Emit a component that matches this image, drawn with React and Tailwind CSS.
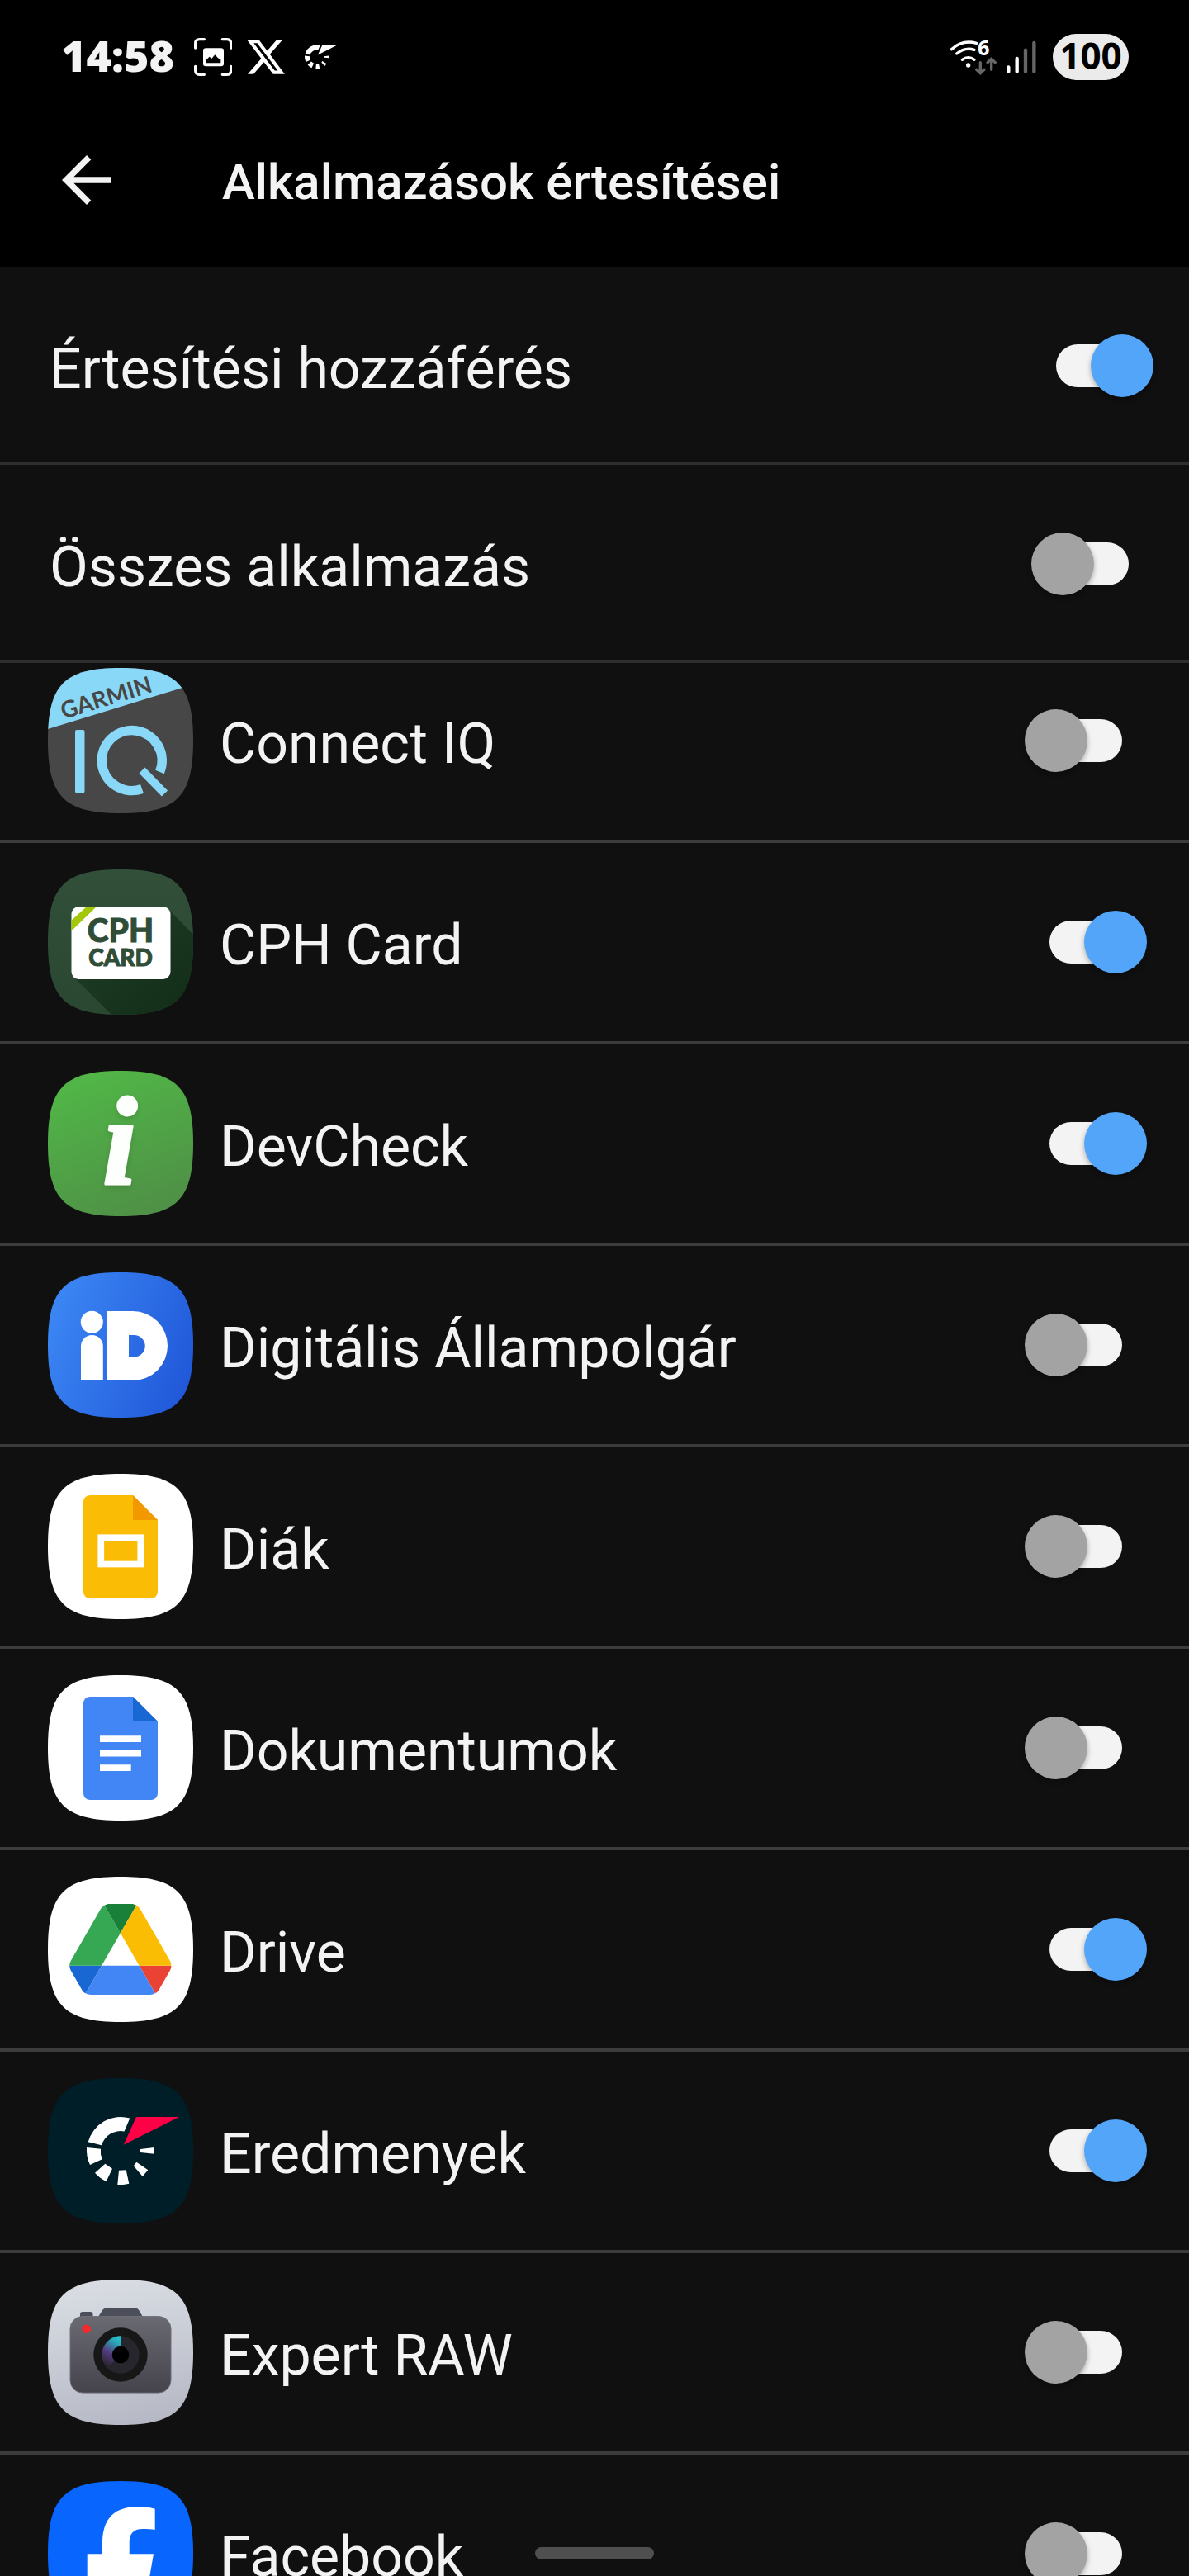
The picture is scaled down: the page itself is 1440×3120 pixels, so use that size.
import { useState } from 'react'

const SQUIRCLE = 'M88 0C156 0 176 20 176 88C176 156 156 176 88 176C20 176 0 156 0 88C0 20 20 0 88 0Z'

function AppIcon({ id, fill, children }) {
  return (
    <svg viewBox="0 0 176 176" className="size-44 shrink-0" aria-hidden="true">
      <defs>
        <clipPath id={`clip-${id}`}>
          <path d={SQUIRCLE} />
        </clipPath>
      </defs>
      <g clipPath={`url(#clip-${id})`}>
        <rect width="176" height="176" fill={fill} />
        {children}
      </g>
    </svg>
  )
}

function ConnectIqIcon() {
  return (
    <AppIcon id="iq" fill="#474747">
      <path d="M0 0H176V20L0 74Z" fill="#89d8f7" />
      <text
        x="19"
        y="62"
        transform="rotate(-17 19 62)"
        className="font-['Lato'] text-[28px] font-bold"
        fill="#474747"
      >
        GARMIN
      </text>
      <rect x="33" y="75" width="11.5" height="76.5" rx="2" fill="#89d8f7" />
      <path d="M135.5 126A36.5 36.5 0 1 0 114 146.5" fill="none" stroke="#89d8f7" strokeWidth="11.5" strokeLinejoin="round" />
      <path d="M114 124L141.500 152" stroke="#89d8f7" strokeWidth="10" />
    </AppIcon>
  )
}

function CphCardIcon() {
  return (
    <AppIcon id="cph" fill="url(#cph-bg)">
      <defs>
        <linearGradient id="cph-bg" x1="0" y1="0" x2="0" y2="1">
          <stop offset="0" stopColor="#314f39" />
          <stop offset="1" stopColor="#2a4831" />
        </linearGradient>
        <linearGradient id="cph-shade" x1="0" y1="0" x2="1" y2="1">
          <stop offset="0.3" stopColor="#1d3a24" />
          <stop offset="1" stopColor="#112c17" />
        </linearGradient>
        <clipPath id="cph-card">
          <rect x="28.500" y="45" width="120" height="88" rx="9" />
        </clipPath>
      </defs>
      <path d="M146 48L176 79V176H77L31 130Z" fill="url(#cph-shade)" />
      <g clipPath="url(#cph-card)">
        <rect x="28" y="45" width="121" height="88" fill="#fff" />
        <path d="M47 45H59L28 75V62Z" fill="#a5c70b" />
      </g>
      <g fill="#304d38" stroke="#304d38" textAnchor="middle" className="font-['Lato'] font-black">
        <text x="88" y="88" className="text-[39px]">
          CPH
        </text>
        <text x="88" y="117" className="text-[28px]">
          CARD
        </text>
      </g>
    </AppIcon>
  )
}

function DevCheckIcon() {
  return (
    <AppIcon id="dev" fill="url(#dev-bg)">
      <defs>
        <linearGradient id="dev-bg" x1="0.2" y1="0" x2="0.600" y2="1">
          <stop offset="0" stopColor="#51b847" />
          <stop offset="1" stopColor="#4f9146" />
        </linearGradient>
      </defs>
      <text
        x="87"
        y="137"
        textAnchor="middle"
        className="font-['Liberation_Serif'] text-[152px] font-bold italic drop-shadow-md"
        fill="#fcfffc"
        stroke="#fcfffc"
        strokeWidth="3"
        strokeLinejoin="round"
      >
        i
      </text>
    </AppIcon>
  )
}

function CitizenIcon() {
  return (
    <AppIcon id="citizen" fill="url(#citizen-bg)">
      <defs>
        <linearGradient id="citizen-bg" x1="0" y1="0.300" x2="1" y2="0.700">
          <stop offset="0" stopColor="#3b86f4" />
          <stop offset="1" stopColor="#2158d9" />
        </linearGradient>
      </defs>
      <circle cx="53.300" cy="60.300" r="13.500" fill="#fff" />
      <path d="M40 131V89.500a13.400 13.400 0 0 1 26.800 0V131Z" fill="#fff" />
      <path
        d="M72 47H103a42 42 0 0 1 0 84H72ZM98 76V102.500h6.500a13.250 13.250 0 0 0 0-26.500Z"
        fill="#fff"
        fillRule="evenodd"
      />
    </AppIcon>
  )
}

function DocumentShape({ color, fold }) {
  return (
    <>
      <path d="M51 26H103L133 56V143a8 8 0 0 1-8 8H51a8 8 0 0 1-8-8V34a8 8 0 0 1 8-8Z" fill={color} />
      <path d="M103 26L133 56H103Z" fill={fold} />
    </>
  )
}

function SlidesIcon() {
  return (
    <AppIcon id="slides" fill="#fff">
      <DocumentShape color="#fbbc06" fold="#f29900" />
      <rect x="64.250" y="77.250" width="48" height="32.250" fill="none" stroke="#fff" strokeWidth="7.700" />
    </AppIcon>
  )
}

function DocsIcon() {
  return (
    <AppIcon id="docs" fill="#fff">
      <DocumentShape color="#4285f4" fold="#1967d2" />
      <path d="M63 73.300h50v7.700H63zM63 90.700h50v7.700H63zM63 108.300h37.700v7.700H63z" fill="#fff" />
    </AppIcon>
  )
}

function DriveIcon() {
  return (
    <AppIcon id="drive" fill="#fff">
      <g transform="translate(26.300 33) scale(1.410)">
        <path fill="#1967d2" d="m6.600 66.850 3.850 6.650c.8 1.400 1.950 2.500 3.300 3.300l13.750-23.800h-27.500c0 1.550.4 3.100 1.200 4.500z" />
        <path fill="#36a853" d="m43.650 25-13.750-23.800c-1.350.8-2.500 1.900-3.300 3.300l-25.400 44a9.060 9.060 0 0 0-1.200 4.500h27.500z" />
        <path fill="#ea4335" d="m73.550 76.800c1.350-.8 2.500-1.900 3.300-3.300l1.600-2.750 7.650-13.250c.8-1.400 1.200-2.950 1.200-4.500h-27.500z" />
        <path fill="#188038" d="m43.650 25 13.750-23.800c-1.350-.8-2.900-1.200-4.500-1.200h-18.500c-1.600 0-3.150.45-4.500 1.200z" />
        <path fill="#4285f4" d="m59.800 53h-32.300l-13.750 23.800c1.350.8 2.900 1.200 4.500 1.200h50.800c1.600 0 3.150-.45 4.500-1.200z" />
        <path fill="#fbbc04" d="m73.400 26.500-12.700-22c-.8-1.400-1.950-2.500-3.300-3.300l-13.750 23.800 16.150 28h27.450c0-1.550-.4-3.100-1.200-4.500z" />
      </g>
    </AppIcon>
  )
}

function FlashMark({ accent }) {
  return (
    <>
      <path
        d="M48.700 77.300A41 41 0 0 1 99.300 48.500L92.500 64.400A24 24 0 0 0 65 81.300ZM47 84L64 85.700A24 24 0 0 0 65.700 98.300L51 105A41 41 0 0 1 47 84ZM69.300 103.700L78 109.700L70.700 125A41 41 0 0 1 57 114.700ZM86 111.700L94.700 111.300L98.300 127.700A41 41 0 0 1 84.300 129ZM107.300 101.700L121.300 111.300L114.700 119L103.700 106.300ZM112 86L129 84V91.700L112 90Z"
        fill="#fff"
      />
      <path d="M107 47H159L91.700 80.700Z" fill={accent} />
    </>
  )
}

function EredmenyekIcon() {
  return (
    <AppIcon id="eredmenyek" fill="#001e28">
      <FlashMark accent="#ff0046" />
    </AppIcon>
  )
}

function ExpertRawIcon() {
  return (
    <AppIcon id="raw" fill="url(#raw-bg)">
      <defs>
        <linearGradient id="raw-bg" x1="0.400" y1="0" x2="0.600" y2="1">
          <stop offset="0" stopColor="#d9dde3" />
          <stop offset="1" stopColor="#b6b9c5" />
        </linearGradient>
        <linearGradient id="raw-body" x1="0" y1="0" x2="0" y2="1">
          <stop offset="0" stopColor="#6a6a72" />
          <stop offset="1" stopColor="#45444c" />
        </linearGradient>
        <linearGradient id="raw-lens" gradientUnits="userSpaceOnUse" x1="90" y1="70" x2="70" y2="104">
          <stop offset="0" stopColor="#24cbd8" />
          <stop offset="0.250" stopColor="#2aa3b5" />
          <stop offset="0.600" stopColor="#543b80" />
          <stop offset="1" stopColor="#26252b" />
        </linearGradient>
      </defs>
      <path d="M39 45V42a3 3 0 0 1 3-3h9.500a3 3 0 0 1 3 3v3ZM61 45L66.500 36.500Q67.800 34.700 70 34.700H106.500Q108.700 34.700 109.800 36.500L115 45Z" fill="#4c4f59" />
      <rect x="27" y="44.600" width="122" height="92.500" rx="15" fill="url(#raw-body)" stroke="#706f7a" />
      <circle cx="46.700" cy="59.700" r="5.300" fill="#f42a2c" />
      <circle cx="88" cy="91" r="32.700" fill="#171717" />
      <circle cx="88" cy="91" r="22.700" fill="#27262c" />
      <path d="M88 68.300A22.700 22.700 0 0 0 72 107L88 91Z" fill="url(#raw-lens)" />
      <circle cx="88" cy="91" r="10.300" fill="#000" />
    </AppIcon>
  )
}

function FacebookIcon() {
  return (
    <AppIcon id="facebook" fill="#0866ff">
      <path
        d="M66 176V120H47.700V88.300H66V75C66 46 80 31.300 108 31.300C116 31.300 124 32 129.700 33.700V59C126 58.300 121 58 115 58C103 58 98.700 64 98.700 75V88.300H128L122.500 120H98.700V176Z"
        fill="#fff"
      />
    </AppIcon>
  )
}

const APPS = [
  { name: 'Connect IQ', Icon: ConnectIqIcon, on: false },
  { name: 'CPH Card', Icon: CphCardIcon, on: true },
  { name: 'DevCheck', Icon: DevCheckIcon, on: true },
  { name: 'Digitális Állampolgár', Icon: CitizenIcon, on: false },
  { name: 'Diák', Icon: SlidesIcon, on: false },
  { name: 'Dokumentumok', Icon: DocsIcon, on: false },
  { name: 'Drive', Icon: DriveIcon, on: true },
  { name: 'Eredmenyek', Icon: EredmenyekIcon, on: true },
  { name: 'Expert RAW', Icon: ExpertRawIcon, on: false },
  { name: 'Facebook', Icon: FacebookIcon, on: false },
]

function Switch({ defaultOn }) {
  const [on, setOn] = useState(defaultOn)
  return (
    <input
      type="checkbox"
      role="switch"
      checked={on}
      onChange={(e) => setOn(e.target.checked)}
      className="relative mx-[30px] h-[52px] w-[88px] shrink-0 appearance-none rounded-full bg-[#f3f3f3] before:absolute before:-top-3 before:-left-[30px] before:size-[76px] before:rounded-full before:bg-[#a3a3a3] before:shadow-[0_3px_6px_rgba(0,0,0,0.3)] before:content-[''] checked:before:left-[42px] checked:before:bg-[#52a5f9]"
    />
  )
}

function StatusBar() {
  return (
    <div className="flex h-[113px] shrink-0 items-center justify-between pt-6 pr-[73px] pl-[74px] font-['Open_Sans',sans-serif]">
      <div className="flex items-center">
        <span className="pb-1 text-[52px] leading-none font-extrabold">14:58</span>
        <svg viewBox="582 75 138 138" className="ml-6 size-[46px]" aria-hidden="true">
          <path
            d="M587 111V95Q587 80 602 80H619M685 80H701Q716 80 716 95V111M716 178V193Q716 208 701 208H685M619 208H602Q587 208 587 193V178"
            fill="none"
            stroke="#fff"
            strokeWidth="10"
            strokeLinecap="round"
          />
          <rect x="615" y="112" width="75" height="66" rx="10" fill="#fff" />
          <path d="M627 166V154L638 143L646 150L658 136L669 148L679 153V166Z" fill="#000" />
        </svg>
        <svg viewBox="1.200 2.200 21.700 19.600" className="ml-[18px] h-[42px] w-[46px]" aria-hidden="true">
          <path
            fill="#fff"
            d="M18.244 2.250h3.308l-7.227 8.260 8.502 11.240H16.170l-5.214-6.817L4.990 21.750H1.680l7.730-8.835L1.254 2.250H8.080l4.713 6.231zm-1.161 17.520h1.833L7.084 4.126H5.117z"
          />
        </svg>
        <svg viewBox="47 47 112 82" className="ml-6 h-[30px] w-10" aria-hidden="true">
          <FlashMark accent="#fff" />
        </svg>
      </div>

      <div className="flex items-center">
        <svg viewBox="88 80 171 132" className="h-11 w-[57px] overflow-visible" aria-hidden="true">
          <g fill="none" strokeWidth="10" strokeLinecap="round">
            <path d="M95 118Q135 82 186 96M114 134Q144 109 178 120M134 156Q156 140 178 156" stroke="#fff" />
            <path d="M200 166V204M186 192L200 205L214 192M240 192V154M226 166L240 153L254 166" stroke="#666" />
          </g>
          <circle cx="156" cy="176" r="8" fill="#fff" />
          <text x="190" y="139" className="text-[76px] font-bold" fill="#fff">
            6
          </text>
        </svg>
        <svg viewBox="299 84 108 120" className="ml-3 h-10 w-9" aria-hidden="true">
          <g strokeWidth="13" strokeLinecap="round">
            <path d="M306 181V197M337 150V197" stroke="#fff" />
            <path d="M368 119V197M399 93V197" stroke="#666" />
          </g>
        </svg>
        <span className="ml-5 flex h-14 w-[92px] items-center justify-center rounded-full bg-[#ebebeb] pb-1 text-[44px] leading-none font-bold text-black">
          100
        </span>
      </div>
    </div>
  )
}

export default function App() {
  return (
    <div className="relative flex h-screen flex-col overflow-hidden bg-[#101010] font-['Roboto',sans-serif] text-[#f3f3f3]">
      <header className="shrink-0 bg-black">
        <StatusBar />
        <div className="flex h-[210px] items-center gap-[119px] pl-[60px]">
          <button type="button" aria-label="Vissza">
            <svg viewBox="0 0 24 24" className="size-[90px]" aria-hidden="true">
              <path fill="#f3f3f3" d="M20 11H7.830l5.590-5.590L12 4l-8 8 8 8 1.410-1.410L7.830 13H20v-2z" />
            </svg>
          </button>
          <h1 className="pt-1.5 text-[60px] leading-none font-medium">Alkalmazások értesítései</h1>
        </div>
      </header>

      <label className="flex h-60 shrink-0 items-center justify-between border-b-4 border-[#2e2e2e] pt-1 pr-[43px] pl-[60px]">
        <span className="pt-2 text-[68px] leading-none">Értesítési hozzáférés</span>
        <Switch defaultOn={true} />
      </label>
      <label className="flex h-60 shrink-0 items-center justify-between border-b-4 border-[#2e2e2e] pt-1 pr-[43px] pl-[60px]">
        <span className="pt-2 text-[68px] leading-none">Összes alkalmazás</span>
        <Switch defaultOn={false} />
      </label>

      <div className="min-h-0 flex-1 overflow-hidden">
        {/* list is scrolled slightly under the fixed rows */}
        <ul className="-mt-[26px]">
          {APPS.map(({ name, Icon, on }) => (
            <li key={name} className="border-b-4 border-[#3c3c3c]">
              <label className="flex h-60 items-center pr-[51px] pl-[58px]">
                <Icon />
                <span className="flex-1 pt-2 pl-8 text-[68px] leading-none">{name}</span>
                <Switch defaultOn={on} />
              </label>
            </li>
          ))}
        </ul>
      </div>

      <div className="absolute bottom-5 left-1/2 h-[15px] w-36 -translate-x-1/2 rounded-full bg-[#4f4f4f]" />
    </div>
  )
}
